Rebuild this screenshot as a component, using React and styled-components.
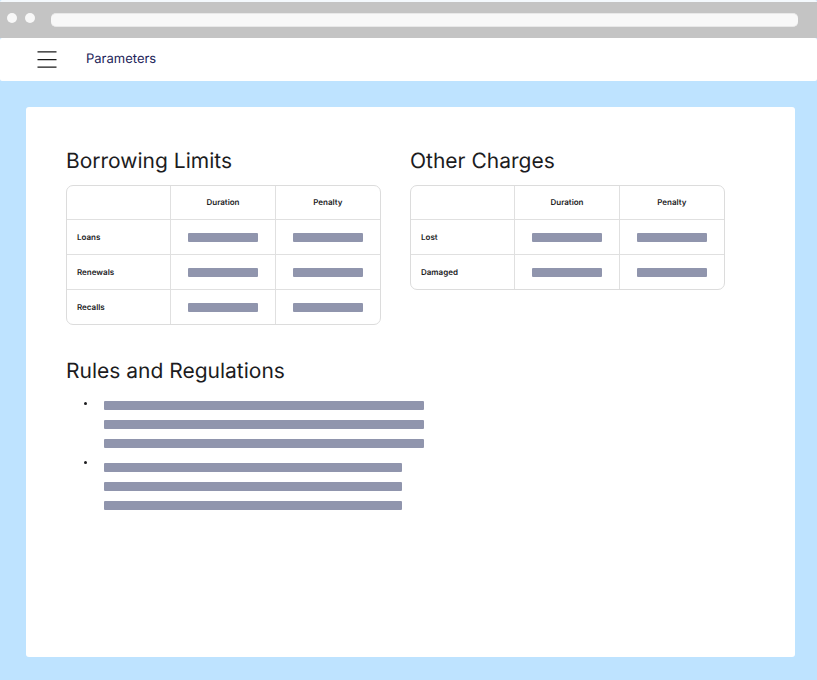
import React from "react";
import styled, { createGlobalStyle } from "styled-components";

const GlobalStyle = createGlobalStyle`
  * { box-sizing: border-box; }
  body {
    margin: 0;
    background: #bee3ff;
    font-family: Inter, "Liberation Sans", sans-serif;
    color: #1c1c1e;
    text-rendering: geometricPrecision;
  }
`;

const Page = styled.div`
  min-height: 100vh;
  display: flex;
  flex-direction: column;
`;

const BrowserBar = styled.div`
  display: flex;
  align-items: center;
  height: 38px;
  padding: 0 19px 0 7px;
  background: #c4c4c4;
  border-top: 2px solid #f4f9fd;
  border-radius: 2px 2px 0 0;
`;

const WindowDots = styled.div`
  display: flex;
  gap: 8px;
  margin: 0 16px 4px 0;
`;

const Dot = styled.span`
  width: 10px;
  height: 10px;
  border-radius: 50%;
  background: #f8f8f8;
`;

const Address = styled.input`
  flex: 1;
  min-width: 0;
  height: 14px;
  padding: 0 8px;
  border: 1px solid #e8e8e8;
  border-width: 1px 0;
  border-radius: 5px;
  background: #f8f8f8;
  font: 10px Inter, sans-serif;
`;

const NavBar = styled.header`
  display: flex;
  align-items: center;
  gap: 29px;
  height: 43px;
  padding: 0 0 2px 37px;
  background: #fff;
  border-radius: 2px;
`;

const MenuButton = styled.button`
  display: flex;
  padding: 0;
  border: 0;
  background: none;
  cursor: pointer;
`;

const PageTitle = styled.h1`
  margin: 0;
  font-size: 13px;
  line-height: 20px;
  font-weight: 400;
  color: #1d2459;
`;

const Card = styled.main`
  flex: 1;
  display: flex;
  flex-direction: column;
  gap: 30px;
  margin: 26px 22px 23px 26px;
  padding: 38px 40px;
  background: #fff;
  border-radius: 3px;
`;

const Tables = styled.div`
  display: flex;
  flex-wrap: wrap;
  align-items: flex-start;
  gap: 29px;
`;

const Section = styled.section`
  flex: 0 1 auto;
`;

const Heading = styled.h2`
  margin: 0 0 6px;
  font-size: 21px;
  line-height: 34px;
  font-weight: 400;
`;

const Table = styled.table`
  width: 315px;
  table-layout: fixed;
  border: 1px solid #dcdcdc;
  border-radius: 7px;
  border-spacing: 0;
  font-size: 8px;
  line-height: 10px;

  th, td {
    height: 35px;
    padding: 0;
    border-right: 1px solid #e0e0e0;
    border-bottom: 1px solid #e0e0e0;
    text-align: center;
    font-weight: 600;
  }
  thead th, thead td {
    height: 34px;
    padding-bottom: 2px;
  }
  th[scope="row"] {
    padding-left: 10px;
    text-align: left;
  }
  tr > :last-child { border-right: 0; }
  tbody tr:last-child > * {
    height: 34px;
    border-bottom: 0;
  }
`;

const Bar = styled.span`
  display: block;
  width: ${({ $width }) => $width};
  max-width: 100%;
  height: 9px;
  border-radius: 1px;
  background: #9095ad;
`;

const CellBar = styled(Bar)`
  margin: 0 auto;
`;

const RuleList = styled.ul`
  display: flex;
  flex-direction: column;
  gap: 12px;
  margin: 12px 0 0;
  padding: 0 0 0 18px;
  list-style: none;
`;

const Rule = styled.li`
  display: flex;
  align-items: flex-start;
  gap: 17px;
`;

const Bullet = styled.span`
  width: 3px;
  height: 3px;
  margin-top: 1px;
  border-radius: 50%;
  background: #1c1c1e;
`;

const Lines = styled.div`
  flex: 1;
  display: flex;
  flex-direction: column;
  gap: 10px;
  padding-top: ${({ $lead }) => $lead};
`;

function ChargeTable({ id, title, rows }) {
  return (
    <Section>
      <Heading id={id}>{title}</Heading>
      <Table aria-labelledby={id}>
        <thead>
          <tr>
            <td />
            <th scope="col">Duration</th>
            <th scope="col">Penalty</th>
          </tr>
        </thead>
        <tbody>
          {rows.map((row) => (
            <tr key={row}>
              <th scope="row">{row}</th>
              <td><CellBar $width="70px" /></td>
              <td><CellBar $width="70px" /></td>
            </tr>
          ))}
        </tbody>
      </Table>
    </Section>
  );
}

const rules = [
  { width: "320px", lead: "0" },
  { width: "298px", lead: "3px" },
];

export default function App() {
  return (
    <Page>
      <GlobalStyle />
      <BrowserBar>
        <WindowDots>
          <Dot />
          <Dot />
        </WindowDots>
        <Address type="text" aria-label="Address" />
      </BrowserBar>
      <NavBar>
        <MenuButton type="button" aria-label="Menu">
          <svg width="20" height="18" viewBox="0 0 20 18" stroke="#1a1a1a" strokeWidth="1.25">
            <path d="M.5 1.8h19M.5 9.5h19M.5 17.2h19" />
          </svg>
        </MenuButton>
        <PageTitle>Parameters</PageTitle>
      </NavBar>
      <Card>
        <Tables>
          <ChargeTable id="limits" title="Borrowing Limits" rows={["Loans", "Renewals", "Recalls"]} />
          <ChargeTable id="charges" title="Other Charges" rows={["Lost", "Damaged"]} />
        </Tables>
        <Section>
          <Heading>Rules and Regulations</Heading>
          <RuleList>
            {rules.map(({ width, lead }) => (
              <Rule key={width}>
                <Bullet />
                <Lines $lead={lead}>
                  <Bar $width={width} />
                  <Bar $width={width} />
                  <Bar $width={width} />
                </Lines>
              </Rule>
            ))}
          </RuleList>
        </Section>
      </Card>
    </Page>
  );
}
